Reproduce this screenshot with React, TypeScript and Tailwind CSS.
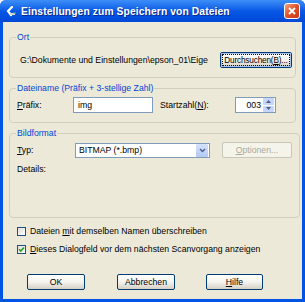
import React from 'react';

const font = { fontFamily: '"Liberation Sans", Arial, sans-serif' };

function XpButton({ children, className = '', focused = false, disabled = false }: { children: React.ReactNode; className?: string; focused?: boolean; disabled?: boolean }) {
  if (disabled) {
    return (
      <div className={`flex items-center justify-center h-[16px] rounded-[2px] border border-[#C9C7BA] bg-[#F5F4EA] text-[#ACA899] ${className}`}>
        {children}
      </div>
    );
  }
  return (
    <div
      className={`flex items-center justify-center h-[16px] rounded-[2px] border border-[#003C74] bg-gradient-to-b from-[#FFFFFF] via-[#F4F3EE] to-[#D6D0C5] text-black ${className}`}
    >
      <div className={`flex items-center justify-center w-full h-full whitespace-nowrap ${focused ? 'outline outline-1 outline-dotted outline-black -outline-offset-[2px] shadow-[inset_0_0_0_1px_#A8C3F0]' : ''}`}>
        {children}
      </div>
    </div>
  );
}

function Checkbox({ checked }: { checked?: boolean }) {
  return (
    <div className="w-[9px] h-[9px] border border-[#1C5180] bg-gradient-to-br from-[#DCDCD7] to-[#FFFFFF] flex items-center justify-center shrink-0">
      {checked && (
        <svg width="7" height="7" viewBox="0 0 7 7">
          <path d="M1 3.2 L2.8 5 L6 1.5" stroke="#21A121" strokeWidth="1.6" fill="none" />
        </svg>
      )}
    </div>
  );
}

function Group({ label, children, className = '' }: { label: string; children: React.ReactNode; className?: string }) {
  return (
    <fieldset className={`border border-[#D0D0BF] rounded-[4px] px-[7px] m-0 ${className}`}>
      <legend className="text-[#0046D5] px-[1px] ml-[-1px] leading-[11px]">{label}</legend>
      {children}
    </fieldset>
  );
}

export default function App() {
  return (
    <div style={font} className="w-[305px] h-[302px] bg-[#0054E3] rounded-t-[6px] flex flex-col overflow-hidden text-[8.7px] leading-[11px] text-black">
      {/* Titelleiste */}
      <div className="h-[22px] shrink-0 flex items-center pl-[6px] pr-[5px] bg-gradient-to-b from-[#3D8EF7] via-[#0858E6] to-[#0147D6]">
        <svg width="11" height="11" viewBox="0 0 11 11" className="shrink-0">
          <path d="M6 1 L2 5 L5 9" stroke="#FFFFFF" strokeWidth="2.2" fill="none" strokeLinecap="round" />
          <path d="M4 8 L9 8" stroke="#D8D8D8" strokeWidth="2" />
          <path d="M7 7 L10 7" stroke="#4FC24F" strokeWidth="1.2" />
        </svg>
        <span className="ml-[4px] text-white font-bold text-[10.3px] tracking-[0.1px] [text-shadow:1px_1px_0_#0A2A8A]">
          Einstellungen zum Speichern von Dateien
        </span>
        <div className="ml-auto w-[16px] h-[16px] rounded-[3px] border border-white bg-gradient-to-br from-[#F0A080] via-[#E0502A] to-[#C83814] flex items-center justify-center">
          <svg width="10" height="10" viewBox="0 0 10 10">
            <path d="M2 2 L8 8 M8 2 L2 8" stroke="#FFFFFF" strokeWidth="1.8" />
          </svg>
        </div>
      </div>

      {/* Inhalt */}
      <div className="flex-1 mx-[3px] mb-[3px] bg-[#ECE9D8] px-[6px] pt-[10px] flex flex-col">
        <Group label="Ort" className="h-[46px]">
          <div className="flex items-center justify-between pt-[9px] pl-[3px]">
            <span>G:\Dokumente und Einstellungen\epson_01\Eige</span>
            <XpButton focused className="w-[72px] mr-[-4px] text-[8.2px] tracking-[-0.15px]">
              <span>
                Durchsuchen(<span className="underline">B</span>)...
              </span>
            </XpButton>
          </div>
        </Group>

        <Group label="Dateiname (Präfix + 3-stellige Zahl)" className="h-[40px] mt-[5px]">
          <div className="flex items-center pt-[3px]">
            <span className="w-[56px]">
              <span className="underline">P</span>räfix:
            </span>
            <div className="w-[80px] h-[16px] border border-[#7F9DB9] bg-white flex items-center pl-[4px]">img</div>
            <span className="ml-[7px] w-[75px]">
              Startzahl(<span className="underline">N</span>):
            </span>
            <div className="w-[41px] h-[16px] border border-[#7F9DB9] bg-white flex items-center justify-end">
              <span className="mr-[2px]">003</span>
              <div className="w-[11px] h-[14px] flex flex-col gap-[1px] mr-[1px]">
                <div className="flex-1 rounded-[1px] bg-[#C5D6FC] flex items-center justify-center">
                  <svg width="5" height="3" viewBox="0 0 5 3"><path d="M0 3 L2.5 0 L5 3Z" fill="#4D6185" /></svg>
                </div>
                <div className="flex-1 rounded-[1px] bg-[#C5D6FC] flex items-center justify-center">
                  <svg width="5" height="3" viewBox="0 0 5 3"><path d="M0 0 L2.5 3 L5 0Z" fill="#4D6185" /></svg>
                </div>
              </div>
            </div>
          </div>
        </Group>

        <Group label="Bildformat" className="h-[90px] mt-[5px]">
          <div className="flex items-center pt-[3px]">
            <span className="w-[58px]">
              <span className="underline">T</span>yp:
            </span>
            <div className="w-[135px] h-[15px] border border-[#7F9DB9] bg-white flex items-center pl-[3px]">
              <span className="flex-1">BITMAP (*.bmp)</span>
              <div className="w-[12px] h-[13px] mr-[1px] rounded-[1px] bg-gradient-to-b from-[#D6E2FC] to-[#B2C8F6] flex items-center justify-center">
                <svg width="7" height="5" viewBox="0 0 7 5"><path d="M1 1 L3.5 3.5 L6 1" stroke="#4D6185" strokeWidth="1.4" fill="none" /></svg>
              </div>
            </div>
            <XpButton disabled className="w-[70px] ml-[12px]">
              <span className="underline">O</span>ptionen...
            </XpButton>
          </div>
          <div className="pt-[6px]">Details:</div>
        </Group>

        <div className="flex items-center gap-[4px] mt-[8px] ml-[8px]">
          <Checkbox />
          <span>
            Dateien <span className="underline">m</span>it demselben Namen überschreiben
          </span>
        </div>
        <div className="flex items-center gap-[4px] mt-[7px] ml-[8px]">
          <Checkbox checked />
          <span>
            <span className="underline">D</span>ieses Dialogfeld vor dem nächsten Scanvorgang anzeigen
          </span>
        </div>

        <div className="flex mt-[19px] ml-[18px] gap-[32px]">
          <XpButton className="w-[58px]">OK</XpButton>
          <XpButton className="w-[58px]">Abbrechen</XpButton>
          <XpButton className="w-[57px] ml-[-1px]">
            <span className="underline">H</span>ilfe
          </XpButton>
        </div>
      </div>
    </div>
  );
}
